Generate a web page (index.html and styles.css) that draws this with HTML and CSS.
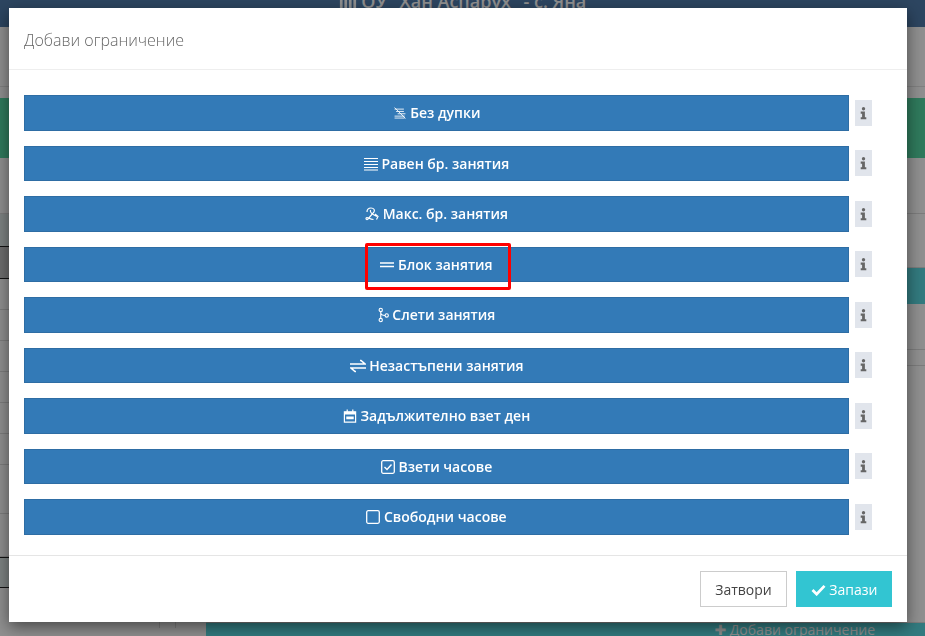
FILE: index.html
```html
<!DOCTYPE html>
<html lang="bg">
<head>
    <meta charset="UTF-8">
    <meta name="viewport" content="width=device-width, initial-scale=1.0">
    <title>Добави ограничение</title>
    <link rel="stylesheet" href="styles.css">
</head>
<body>

    <!-- Page behind the dialog -->
    <div class="page">
        <header class="top-bar">
            <div class="school-name">
                <svg class="school-icon" viewBox="0 0 20 20"><path d="M1 4h3v16H1zM6 1h3v19H6zM11 8h3v12h-3zM16 4h3v16h-3z"/></svg>
                ОУ "Хан Аспарух" - с. Яна
            </div>
        </header>
        <div class="sub-bar"></div>
        <div class="page-columns">
            <div class="left-col">
                <div class="green-band"></div>
                <div class="row row-56"></div>
                <div class="row row-33 tinted"></div>
                <div class="row row-32 selected"></div>
                <div class="row row-31"></div>
                <div class="row row-31"></div>
                <div class="row row-31"></div>
                <div class="row row-31"></div>
                <div class="row row-31"></div>
                <div class="row row-31"></div>
                <div class="row row-49"></div>
                <div class="row row-43"></div>
                <div class="row row-31 tinted strong"></div>
                <div class="row-end">
                    <span class="cell-line"></span>
                    <span class="cell-line"></span>
                </div>
            </div>
            <div class="right-col">
                <div class="green-band"></div>
                <div class="row row-56"></div>
                <div class="row row-54"></div>
                <div class="teal-band"></div>
                <div class="row row-35"></div>
                <div class="row row-16"></div>
                <div class="row row-257"></div>
                <div class="add-bar"><span class="plus">✚</span> Добави ограничение</div>
            </div>
        </div>
    </div>
    <div class="backdrop"></div>

    <!-- Dialog -->
    <div class="modal">
        <div class="modal-header">Добави ограничение</div>
        <div class="modal-body">
            <div class="rule-row">
                <button class="rule-btn">
                    <svg class="icon" viewBox="0 0 18 16"><path d="M2 3h12M4 6h10M6 9h10M2 12h13M2 14.500h13M2 1l14 14" fill="none" stroke="currentColor" stroke-width="1.100"/></svg>
                    Без дупки
                </button>
                <span class="info"><svg viewBox="0 0 10 18"><circle cx="5" cy="3" r="2.400"/><path d="M1 7h6v8h2v3H1v-3h2v-5H1z"/></svg></span>
            </div>
            <div class="rule-row">
                <button class="rule-btn">
                    <svg class="icon" viewBox="0 0 14 14"><path d="M0 1.500h14M0 4.500h14M0 7.500h14M0 10.500h14M0 13h14" fill="none" stroke="currentColor" stroke-width="1.200"/></svg>
                    Равен бр. занятия
                </button>
                <span class="info"><svg viewBox="0 0 10 18"><circle cx="5" cy="3" r="2.400"/><path d="M1 7h6v8h2v3H1v-3h2v-5H1z"/></svg></span>
            </div>
            <div class="rule-row">
                <button class="rule-btn">
                    <svg class="icon" viewBox="0 0 14 14"><path d="M2 5c0-3 2-4 4-4 3 0 4 2 3 4L3 12c-1 1-2 .5-2-.5s1.500-1 2.500-.5 3 1.500 5 1.500M5.500 3C5 5 7 7 9 8l3 1.500M10 7l3 2.500-1.500 3" fill="none" stroke="currentColor" stroke-width="1.200"/></svg>
                    Макс. бр. занятия
                </button>
                <span class="info"><svg viewBox="0 0 10 18"><circle cx="5" cy="3" r="2.400"/><path d="M1 7h6v8h2v3H1v-3h2v-5H1z"/></svg></span>
            </div>
            <div class="rule-row">
                <button class="rule-btn">
                    <svg class="icon" viewBox="0 0 14 14"><path d="M0 5h14M0 8.500h14" fill="none" stroke="currentColor" stroke-width="1.500"/></svg>
                    Блок занятия
                </button>
                <span class="info"><svg viewBox="0 0 10 18"><circle cx="5" cy="3" r="2.400"/><path d="M1 7h6v8h2v3H1v-3h2v-5H1z"/></svg></span>
            </div>
            <div class="rule-row">
                <button class="rule-btn">
                    <svg class="icon icon-merge" viewBox="0 0 12 16"><circle cx="3" cy="2.500" r="1.800"/><circle cx="3" cy="13.500" r="1.800"/><circle cx="9.500" cy="8.500" r="1.800"/><path d="M3 4.300v7.400M3 6c.5 2 2 2.500 4.700 2.500"/></svg>
                    Слети занятия
                </button>
                <span class="info"><svg viewBox="0 0 10 18"><circle cx="5" cy="3" r="2.400"/><path d="M1 7h6v8h2v3H1v-3h2v-5H1z"/></svg></span>
            </div>
            <div class="rule-row">
                <button class="rule-btn">
                    <svg class="icon icon-wide" viewBox="0 0 16 14"><path d="M0 5h13M10 1.500h1L15 5h-3M16 9H3M6 12.500H5L1 9h3" fill="none" stroke="currentColor" stroke-width="1.600"/></svg>
                    Незастъпени занятия
                </button>
                <span class="info"><svg viewBox="0 0 10 18"><circle cx="5" cy="3" r="2.400"/><path d="M1 7h6v8h2v3H1v-3h2v-5H1z"/></svg></span>
            </div>
            <div class="rule-row">
                <button class="rule-btn">
                    <svg class="icon" viewBox="0 0 14 15"><path d="M1 3h12v11H1zM4 .500v3M10 .500v3" fill="none" stroke="currentColor" stroke-width="1.300"/><path d="M1 3h12v3H1zM3 8h8v3H3z" fill="currentColor"/></svg>
                    Задължително взет ден
                </button>
                <span class="info"><svg viewBox="0 0 10 18"><circle cx="5" cy="3" r="2.400"/><path d="M1 7h6v8h2v3H1v-3h2v-5H1z"/></svg></span>
            </div>
            <div class="rule-row">
                <button class="rule-btn">
                    <svg class="icon" viewBox="0 0 14 14"><rect x=".7" y=".7" width="12.600" height="12.600" rx="1.500" fill="none" stroke="currentColor" stroke-width="1.300"/><path d="M3.500 7l2.500 2.500 4.500-5" fill="none" stroke="currentColor" stroke-width="1.400"/></svg>
                    Взети часове
                </button>
                <span class="info"><svg viewBox="0 0 10 18"><circle cx="5" cy="3" r="2.400"/><path d="M1 7h6v8h2v3H1v-3h2v-5H1z"/></svg></span>
            </div>
            <div class="rule-row">
                <button class="rule-btn">
                    <svg class="icon" viewBox="0 0 14 14"><rect x=".7" y=".7" width="12.600" height="12.600" rx="1.500" fill="none" stroke="currentColor" stroke-width="1.300"/></svg>
                    Свободни часове
                </button>
                <span class="info"><svg viewBox="0 0 10 18"><circle cx="5" cy="3" r="2.400"/><path d="M1 7h6v8h2v3H1v-3h2v-5H1z"/></svg></span>
            </div>
            <!-- Red annotation around the selected rule -->
            <div class="highlight"></div>
        </div>
        <div class="modal-footer">
            <button class="btn-close">Затвори</button>
            <button class="btn-save">
                <svg class="check" viewBox="0 0 16 13"><path d="M1.500 6.500l4.500 4.500 8.500-9" fill="none" stroke="currentColor" stroke-width="3"/></svg>
                Запази
            </button>
        </div>
    </div>

</body>
</html>
```

FILE: styles.css
```css
body {
    font-family: 'Open Sans', 'DejaVu Sans', sans-serif;
    font-size: 14px;
    margin: 0;
    height: 636px;
    overflow: hidden;
    background-color: white;
}

/* Page behind the dialog */
.page {
    height: 636px;
    overflow: hidden;
}

.top-bar {
    height: 27px;
    background-color: #4f7bab;
    overflow: hidden;
    text-align: center;
}

.school-name {
    margin-top: -9px;
    padding-right: 0;
    color: white;
    font-size: 18px;
    font-weight: 600;
    line-height: 20px;
}

.school-icon {
    width: 18px;
    height: 18px;
    fill: white;
    vertical-align: -2px;
}

.sub-bar {
    height: 59px;
    border-bottom: 1px solid #e4e4e4;
}

.page-columns {
    display: grid;
    grid-template-columns: 206px 1fr;
}

.green-band {
    height: 60px;
    margin-top: 11px;
    background-color: #54d9a4;
}

.row {
    box-sizing: border-box;
    border-bottom: 1px solid #dddddd;
}

.row-56 { height: 56px; }
.row-54 { height: 54px; }
.row-49 { height: 49px; }
.row-43 { height: 43px; }
.row-35 { height: 46px; }
.row-33 { height: 33px; }
.row-32 { height: 32px; }
.row-31 { height: 31px; }
.row-16 { height: 16px; }
.row-257 { height: 257px; }

.tinted {
    background-color: #dfe9e8;
    border-bottom: 1px solid #222;
}

.selected {
    background-color: #c4c4c4;
    border-bottom: 1px solid #222;
}

.strong {
    border-top: 1px solid #222;
}

.row-end {
    display: flex;
    justify-content: flex-end;
    gap: 15px;
    height: 40px;
    padding-right: 30px;
}

.cell-line {
    width: 1px;
    background-color: #dddddd;
}

.teal-band {
    height: 36px;
    background-color: #5adae2;
}

.add-bar {
    height: 40px;
    padding-right: 50px;
    margin-top: 0;
    background-color: #5adae2;
    color: white;
    font-size: 14px;
    text-align: right;
    line-height: 13px;
}

.plus {
    font-size: 14px;
}

.backdrop {
    position: fixed;
    inset: 0;
    background-color: rgba(0, 0, 0, 0.44);
}

/* Dialog */
.modal {
    position: fixed;
    top: 8px;
    left: 9px;
    width: 898px;
    height: 614px;
    background-color: white;
    box-shadow: 0 5px 15px rgba(0, 0, 0, 0.5);
    display: flex;
    flex-direction: column;
}

.modal-header {
    box-sizing: border-box;
    height: 62px;
    padding: 0 15px;
    border-bottom: 1px solid #eeeeee;
    color: #666666;
    font-size: 16px;
    font-weight: 300;
    line-height: 65px;
}

.modal-body {
    position: relative;
    flex: 1;
    padding: 25px 15px 0;
    display: flex;
    flex-direction: column;
    gap: 15px;
}

.rule-row {
    display: flex;
    gap: 6px;
    padding-right: 20px;
    align-items: center;
}

.rule-btn {
    flex: 1;
    height: 35.5px;
    padding: 0;
    border: 1px solid #2e6da4;
    background-color: #337ab7;
    color: white;
    font-family: inherit;
    font-size: 14px;
    font-weight: 600;
    cursor: pointer;
}

.icon {
    width: 14px;
    height: 14px;
    vertical-align: -2px;
}

.icon-wide {
    width: 16px;
}

.icon-merge {
    width: 11px;
    height: 16px;
    vertical-align: -3px;
    fill: none;
    stroke: currentColor;
    stroke-width: 1.200;
}

.info {
    width: 17px;
    height: 26px;
    background-color: #e1e5ec;
    display: flex;
    align-items: center;
    justify-content: center;
}

.info svg {
    width: 7px;
    height: 14px;
    fill: #666666;
}

.highlight {
    position: absolute;
    top: 173px;
    left: 356px;
    width: 140px;
    height: 41px;
    border: 3px solid #ff0000;
    border-radius: 2px;
}

.modal-footer {
    box-sizing: border-box;
    height: 67px;
    padding: 15px;
    border-top: 1px solid #e5e5e5;
    display: flex;
    justify-content: flex-end;
    gap: 9px;
}

.modal-footer button {
    height: 36px;
    font-family: inherit;
    font-size: 14px;
    cursor: pointer;
}

.btn-close {
    width: 87px;
    border: 1px solid #cccccc;
    background-color: white;
    color: #444444;
}

.btn-save {
    width: 96px;
    border: 1px solid #32c5d2;
    background-color: #32c5d2;
    color: white;
}

.check {
    width: 15px;
    height: 12px;
    vertical-align: -1px;
}
```
